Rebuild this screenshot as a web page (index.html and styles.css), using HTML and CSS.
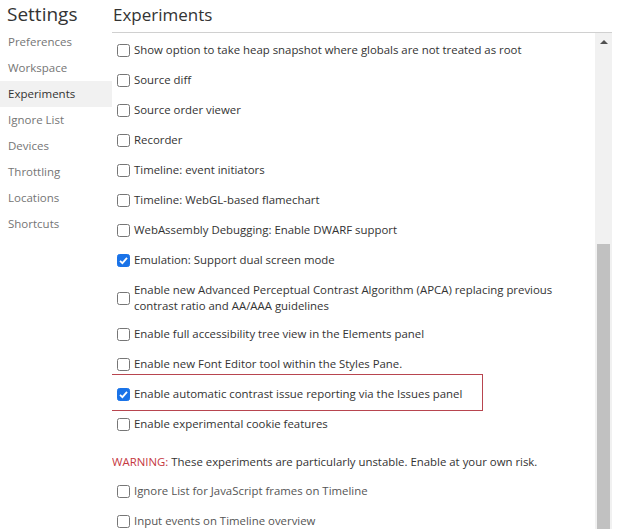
FILE: index.html
```html
<!DOCTYPE html>
<html>
<head>
<meta charset="utf-8">
<link rel="stylesheet" href="styles.css">
</head>
<body>
<div class="app">
  <nav class="sidebar">
    <div class="side-title">Settings</div>
    <div class="side-item">Preferences</div>
    <div class="side-item">Workspace</div>
    <div class="side-item selected">Experiments</div>
    <div class="side-item">Ignore List</div>
    <div class="side-item">Devices</div>
    <div class="side-item">Throttling</div>
    <div class="side-item">Locations</div>
    <div class="side-item">Shortcuts</div>
  </nav>
  <main class="main">
    <div class="main-title">Experiments</div>
    <div class="body">
      <div class="list">
        <div class="row"><span class="cb"></span><span class="label">Show option to take heap snapshot where globals are not treated as root</span></div>
        <div class="row"><span class="cb"></span><span class="label">Source diff</span></div>
        <div class="row"><span class="cb"></span><span class="label">Source order viewer</span></div>
        <div class="row"><span class="cb"></span><span class="label">Recorder</span></div>
        <div class="row"><span class="cb"></span><span class="label">Timeline: event initiators</span></div>
        <div class="row"><span class="cb"></span><span class="label">Timeline: WebGL-based flamechart</span></div>
        <div class="row"><span class="cb"></span><span class="label">WebAssembly Debugging: Enable DWARF support</span></div>
        <div class="row"><span class="cb on"><svg viewBox="0 0 13 13" width="13" height="13"><path d="M3 6.8 L5.4 9.1 L10 3.9" fill="none" stroke="#fff" stroke-width="1.8"/></svg></span><span class="label">Emulation: Support dual screen mode</span></div>
        <div class="row two"><span class="cb"></span><span class="label">Enable new Advanced Perceptual Contrast Algorithm (APCA) replacing previous contrast ratio and AA/AAA guidelines</span></div>
        <div class="row"><span class="cb"></span><span class="label">Enable full accessibility tree view in the Elements panel</span></div>
        <div class="row"><span class="cb"></span><span class="label">Enable new Font Editor tool within the Styles Pane.</span></div>
        <div class="row marked"><span class="cb on"><svg viewBox="0 0 13 13" width="13" height="13"><path d="M3 6.8 L5.4 9.1 L10 3.9" fill="none" stroke="#fff" stroke-width="1.8"/></svg></span><span class="label">Enable automatic contrast issue reporting via the Issues panel</span><span class="mark-box"></span></div>
        <div class="row"><span class="cb"></span><span class="label">Enable experimental cookie features</span></div>
        <div class="warning"><span class="warn-word">WARNING:</span> These experiments are particularly unstable. Enable at your own risk.</div>
        <div class="row unstable"><span class="cb"></span><span class="label">Ignore List for JavaScript frames on Timeline</span></div>
        <div class="row unstable"><span class="cb"></span><span class="label">Input events on Timeline overview</span></div>
      </div>
      <div class="scrollbar">
        <div class="arrow"></div>
        <div class="gap"></div>
        <div class="thumb"></div>
      </div>
    </div>
  </main>
</div>
</body>
</html>
```
FILE: styles.css
```css
html, body {
  margin: 0;
  padding: 0;
  background: #fff;
  overflow: hidden;
}
body {
  font-family: "Open Sans", "Noto Sans", sans-serif;
  color: #333;
  width: 620px;
  height: 529px;
}
.app {
  display: flex;
  height: 529px;
}
.sidebar {
  width: 112px;
  flex: none;
  display: flex;
  flex-direction: column;
}
.side-title {
  height: 29px;
  padding-left: 7px;
  font-size: 19px;
  line-height: 29px;
  color: #333;
}
.side-item {
  height: 26px;
  line-height: 26px;
  padding-left: 8px;
  font-size: 11.5px;
  color: #757575;
}
.side-item.selected {
  background: #f1f1f1;
  color: #333;
}
.main {
  width: 500px;
  flex: none;
  display: flex;
  flex-direction: column;
}
.main-title {
  height: 32px;
  line-height: 30px;
  padding-left: 1px;
  font-size: 17px;
  border-bottom: 1px solid #d0d0d0;
  color: #333;
}
.body {
  flex: 1;
  display: flex;
  min-height: 0;
}
.list {
  flex: 1;
  overflow: hidden;
  padding-top: 2px;
}
.row {
  position: relative;
  display: flex;
  align-items: center;
  padding: 7px 0 7px 5px;
  font-size: 11.4px;
  line-height: 16px;
}
.row.two {
  padding-bottom: 5px;
}
.row.unstable .label {
  color: #555;
}
.cb {
  width: 11px;
  height: 11px;
  border: 1px solid #767676;
  border-radius: 2.5px;
  flex: none;
  margin-right: 4px;
  position: relative;
}
.cb.on {
  background: #1a73e8;
  border-color: #1a73e8;
}
.cb svg {
  position: absolute;
  left: -1px;
  top: -1px;
}
.label {
  width: 455px;
}
.mark-box {
  position: absolute;
  left: -22px;
  top: -5px;
  width: 391px;
  height: 35px;
  border: 1px solid #b8454f;
}
.warning {
  padding: 15px 0 6px 0;
  font-size: 11.4px;
  line-height: 16px;
}
.warn-word {
  color: #c5393f;
}
.scrollbar {
  width: 17px;
  flex: none;
  background: #f1f1f1;
  display: flex;
  flex-direction: column;
  align-items: center;
}
.arrow {
  margin-top: 7px;
  width: 0;
  height: 0;
  border-left: 4px solid transparent;
  border-right: 4px solid transparent;
  border-bottom: 4px solid #505050;
}
.gap {
  height: 200px;
}
.thumb {
  flex: 1;
  width: 13px;
  background: #c1c1c1;
}
```
